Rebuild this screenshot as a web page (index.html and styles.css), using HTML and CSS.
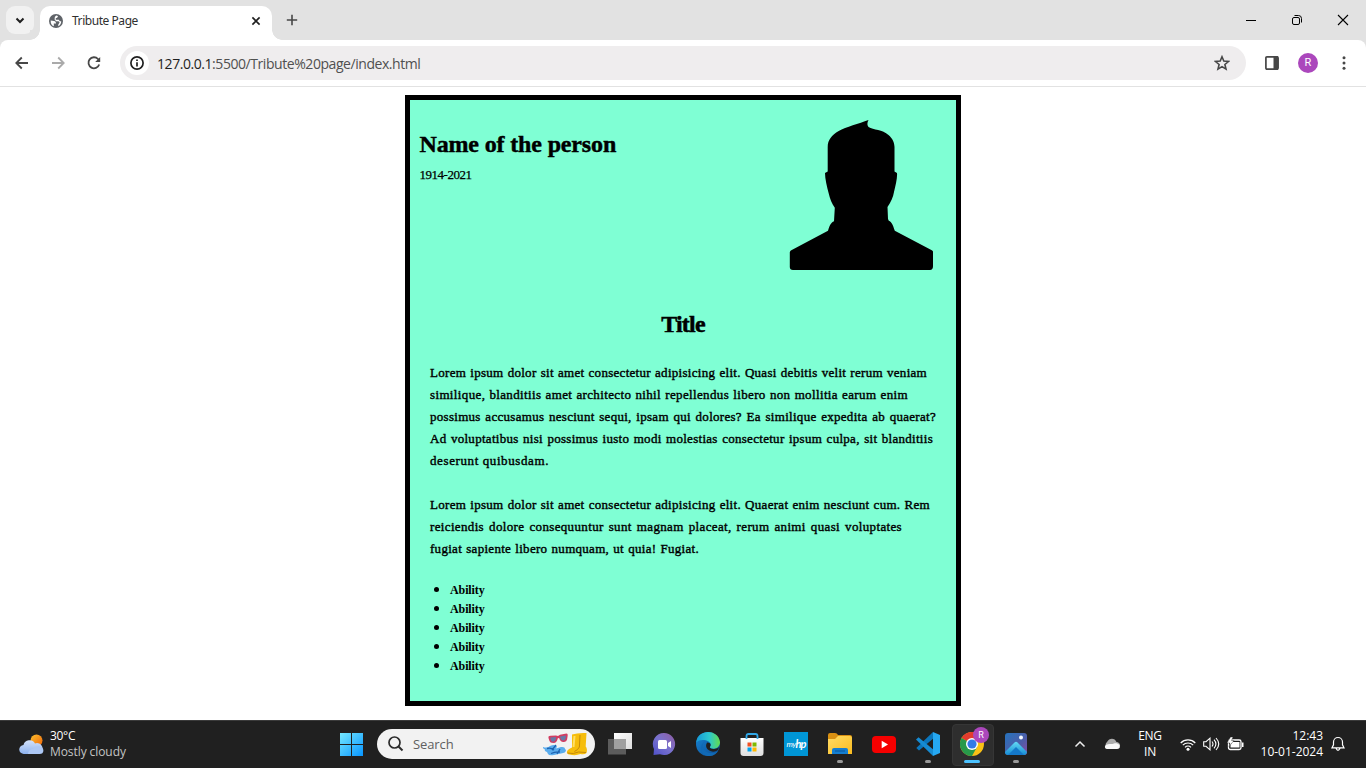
FILE: index.html
```html
<!DOCTYPE html>
<html lang="en">
<head>
<meta charset="utf-8">
<title>Tribute Page</title>
<link rel="stylesheet" href="styles.css">
</head>
<body>
<div class="browser">
<header class="tabstrip">
  <div class="tab-search"><svg width="28" height="28" viewBox="0 0 28 28"><path d="M10.500 12.500l3.500 3.500 3.500-3.500" fill="none" stroke="#1f1f1f" stroke-width="2"/></svg></div>
  <div class="tab">
    <svg width="14" height="14" viewBox="0 0 14 14"><circle cx="7" cy="7" r="7" fill="#5f6368"/><path d="M1.700 6.500L5 7c1.400.3 2 .9 2 2.400H4.800v2.800C2.700 11.400 1.500 9.500 1.700 6.500zM8.900 1.900C8.900 3.400 8 4 6.800 4v1.700h3.100l.8 1.500h1.500c.1 2.200-1.100 4.200-3 5l.1-1.700 1.300-1.900-1-1.300H7.100L5.600 5.400l.2-2.500 1.300-1.300z" fill="#fff"/></svg>
    <span class="tab-title">Tribute Page</span>
    <svg width="10" height="10" viewBox="0 0 10 10"><path d="M1.400 1.400l7.200 7.200M8.600 1.400L1.400 8.600" stroke="#1f1f1f" stroke-width="1.600"/></svg>
  </div>
  <svg class="new-tab" width="12" height="12" viewBox="0 0 12 12"><path d="M6 .8v10.400M.8 6h10.400" stroke="#474747" stroke-width="1.600"/></svg>
  <div class="window-buttons">
    <svg width="46" height="40" viewBox="0 0 46 40"><path d="M18 20.500h10" stroke="#000"/></svg>
    <svg width="46" height="40" viewBox="0 0 46 40"><path d="M20.500 15.500h4a3 3 0 0 1 3 3v4" fill="none" stroke="#000"/><rect x="18.500" y="17.500" width="7" height="7" rx="1.500" fill="none" stroke="#000"/></svg>
    <svg width="46" height="40" viewBox="0 0 46 40"><path d="M18 15l10 10M28 15L18 25" stroke="#000" stroke-width="1.100"/></svg>
  </div>
</header>
<nav class="toolbar">
  <svg width="36" height="36" viewBox="0 0 36 36"><path d="M24 18H12.500M17.800 12.500L12.300 18l5.500 5.500" fill="none" stroke="#474747" stroke-width="1.800"/></svg>
  <svg width="36" height="36" viewBox="0 0 36 36"><path d="M12 18h11.500M18.200 12.500l5.500 5.500-5.500 5.500" fill="none" stroke="#aaa" stroke-width="1.800"/></svg>
  <svg width="36" height="36" viewBox="0 0 36 36"><path d="M23.200 19.500a5.500 5.500 0 1 1-1.200-5.500l1.500 1.800" fill="none" stroke="#474747" stroke-width="1.800"/><path d="M24.200 12v5h-5z" fill="#474747"/></svg>
  <div class="omnibox">
    <span class="site-info"><svg width="14" height="14" viewBox="0 0 14 14"><circle cx="7" cy="7" r="6.100" fill="none" stroke="#1f1f1f" stroke-width="1.700"/><path d="M7 6.200v4.200M7 3.500v1.600" stroke="#1f1f1f" stroke-width="1.700"/></svg></span>
    <span class="url"><b>127.0.0.1</b>:5500/Tribute%20page/index.html</span>
    <svg width="16" height="16" viewBox="0 0 16 16"><path d="M8 1.800l1.800 4.300 4.700.4-3.600 3 1.100 4.600-4-2.500-4 2.500 1.100-4.600-3.600-3 4.700-.4z" fill="none" stroke="#474747" stroke-width="1.600"/></svg>
  </div>
  <svg class="panel" width="14" height="14" viewBox="0 0 14 14"><rect x=".9" y=".9" width="12.200" height="12.200" rx="1" fill="none" stroke="#474747" stroke-width="1.700"/><path d="M8.500 0H13v14H8.500z" fill="#474747"/></svg>
  <span class="avatar">R</span>
  <svg class="kebab" width="4" height="14" viewBox="0 0 4 14"><g fill="#474747"><circle cx="2" cy="1.800" r="1.500"/><circle cx="2" cy="7" r="1.500"/><circle cx="2" cy="12.200" r="1.500"/></g></svg>
</nav>
</div>
<main class="page">
  <article class="card">
    <section class="intro">
      <div>
        <h1 class="name">Name of the person</h1>
        <p class="years">1914-2021</p>
      </div>
      <svg class="portrait" width="144" height="150" viewBox="0 0 144 150"><path d="M79.500 0C78 3 78 5 79.500 7c5 3 14 2.500 20 8 4 3.500 5.800 7 6 12v24.500l2.500 1.500c.5 5-1.500 12-3 19-.8 5-3 10-6.500 15l.5 12 .8 1.800c3 1.500 4 4 6 10l37 19.500c1 .6 1.200 1 1.200 2v14c0 2.300-1 3.700-3 3.700H4c-2.200 0-3.200-1-3.200-3v-14c0-1.200.3-2 1.500-2.700L39 110.800c1.500-5 3-8.500 6-9.500l.8-13.500c-3-4-5-9.500-6-14C38 67 36 59 36 53l2.700-1.500V27c0-7 4-12 11-16C57 7 70 3.500 79.500 0z"/></svg>
    </section>
    <h2 class="title">Title</h2>
    <p class="para">
      <span class="line w497">Lorem ipsum dolor sit amet consectetur adipisicing elit. Quasi debitis velit rerum veniam</span>
      <span class="line w478">similique, blanditiis amet architecto nihil repellendus libero non mollitia earum enim</span>
      <span class="line w506">possimus accusamus nesciunt sequi, ipsam qui dolores? Ea similique expedita ab quaerat?</span>
      <span class="line w503">Ad voluptatibus nisi possimus iusto modi molestias consectetur ipsum culpa, sit blanditiis</span>
      <span class="line w119">deserunt quibusdam.</span>
    </p>
    <p class="para">
      <span class="line w500">Lorem ipsum dolor sit amet consectetur adipisicing elit. Quaerat enim nesciunt cum. Rem</span>
      <span class="line w472">reiciendis dolore consequuntur sunt magnam placeat, rerum animi quasi voluptates</span>
      <span class="line w269">fugiat sapiente libero numquam, ut quia! Fugiat.</span>
    </p>
    <ul class="abilities"><li>Ability</li><li>Ability</li><li>Ability</li><li>Ability</li><li>Ability</li></ul>
  </article>
</main>
<footer class="taskbar">
  <div class="weather">
    <svg width="25" height="21" viewBox="0 0 25 21"><defs><linearGradient id="sun" x1="0" y1="0" x2="1" y2="1"><stop stop-color="#fbc02d"/><stop offset="1" stop-color="#f0640a"/></linearGradient><linearGradient id="cl" x1="0" y1="0" x2="0" y2="1"><stop stop-color="#d3e2fb"/><stop offset="1" stop-color="#8db2ee"/></linearGradient></defs><circle cx="17.500" cy="6.500" r="6" fill="url(#sun)"/><path d="M5 20a4.500 4.500 0 0 1-.5-9A6.200 6.200 0 0 1 16 9.500a5.300 5.300 0 0 1 4 10.500z" fill="url(#cl)"/><path d="M9 20a5 5 0 0 1 5-5c1-3 7-4 9.500-1 2 3 .5 6-3 6z" fill="#adc8f5"/></svg>
    <div class="weather-text"><div class="temp">30°C</div><div class="condition">Mostly cloudy</div></div>
  </div>
  <div class="apps">
    <div class="app"><svg width="24" height="24" viewBox="0 0 24 24"><defs><linearGradient id="win" x1="0" y1="0" x2="1" y2="1"><stop stop-color="#75e8ff"/><stop offset="1" stop-color="#0795ff"/></linearGradient></defs><path d="M1 1h11v11H1zM13 1h11v11H13zM1 13h11v11H1zM13 13h11v11H13z" fill="url(#win)"/></svg></div>
    <div class="search">
      <svg width="16" height="16" viewBox="0 0 16 16"><circle cx="6.500" cy="6.500" r="5.500" fill="none" stroke="#2b2b2b" stroke-width="1.700"/><path d="M10.500 10.500l4 4" stroke="#2b2b2b" stroke-width="2"/></svg>
      <span class="search-label">Search</span>
      <svg class="doodle" width="45" height="25" viewBox="0 0 45 25"><path d="M5.500 6Q5 3.800 7.500 3.800l5.500-.3 2 .6 2-1.400 6.500-1.200q1.500 0 1.200 2l-.6 4q-.5 2-3 2.500-3.500.7-5-4l-1.300.2Q14 11 10.500 11q-3.500 0-4.200-2.500z" fill="#d23c62"/><path d="M7.300 5.500l5.700-.4q0 4.500-3 4.600-2.200 0-2.700-4.200zM17 4.600l6-1.200q-.2 5-2.800 5.200-2.400 0-3.200-4z" fill="#6678a6"/><path d="M0 15q4 1.500 7-1 5-2 7 .5l-1 2 5-1.500q4-.5 4 2l1 1q0 3-5 3.500l-7 1.500q-5 1-6-1l-1-2q-3-1-2-2.500Q-.5 16.500 0 15z" fill="#5aaced"/><path d="M4 16.500q4-1 7 1.500M13 13l-4 5M8 21.500q4-2 9-1.500M17 17l-3 5" stroke="#1d62b0" stroke-width="1.300" fill="none"/><path d="M29 2.500Q35 .5 43.500 1l-.8 13.500q2 2.500.8 6.500-2 1.800-6 1-5 2-11 .5-3-.5-2.500-3 .5-2 5-4z" fill="#f6bd0c"/><path d="M37 3l-.6 12q-1.400 3-5 4.500M24.500 21q6 1.500 11-1l7.500.5" stroke="#c48a09" fill="none"/><path d="M31.500 4l-1 11" stroke="#ffdf62" stroke-width="2"/></svg>
    </div>
    <div class="app"><svg width="24" height="22" viewBox="0 0 24 22"><defs><linearGradient id="tv" x1="0" y1="0" x2="1" y2="1"><stop stop-color="#fff"/><stop offset="1" stop-color="#ddd"/></linearGradient></defs><path d="M6 0h18v16H6z" fill="url(#tv)"/><path d="M0 6h18v15.500H0z" fill="#5c5c5c"/><path d="M6 6h12v10H6z" fill="#a0a0a0"/></svg></div>
    <div class="app"><svg width="24" height="24" viewBox="0 0 24 24"><defs><linearGradient id="chat" x1="1" y1="0" x2="0" y2="1"><stop stop-color="#8f5b9f"/><stop offset=".5" stop-color="#7972ce"/><stop offset="1" stop-color="#4e50c8"/></linearGradient></defs><path d="M12 1a11 11 0 1 1-4 21.200L1.500 23l.5-6A11 11 0 0 1 12 1z" fill="url(#chat)"/><rect x="6" y="8" width="9" height="9" rx="1.500" fill="#fff"/><path d="M16 11l3-2v7l-3-2z" fill="#fff"/></svg></div>
    <div class="app"><svg width="24" height="24" viewBox="0 0 24 24"><defs><linearGradient id="ed" x1="0" y1="0" x2="1" y2="0"><stop stop-color="#1598d8"/><stop offset=".55" stop-color="#2cc8cf"/><stop offset="1" stop-color="#63dd4d"/></linearGradient><linearGradient id="eb" x1="0" y1="0" x2="1" y2="1"><stop stop-color="#1785d4"/><stop offset="1" stop-color="#0c4e96"/></linearGradient></defs><circle cx="12" cy="12" r="12" fill="url(#eb)"/><path d="M.2 10.500C1.500-3 22-3.500 24 10c.2 5.500-5 8-9.500 6-1.200-.8-.5-1.300.1-2.500C16 8.500 4.500 5.500.2 10.500z" fill="url(#ed)"/><path d="M9 9.500c-5 4-1 12 7 11.500 3.500 0 5-1.300 6.500-3-2 5-7 6.500-11 6-7.500-1-9-11-2.500-14.500z" fill="#1169b5"/><path d="M11 10.500q4 .2 3.500 3l-.7 2q1 2 5 1.500 3-.4 4.500-2-1 3-3 4-4 1.500-7-.5-5-3-2.300-8z" fill="#202020"/></svg></div>
    <div class="app"><svg width="24" height="24" viewBox="0 0 24 24"><defs><linearGradient id="st" x1="0" y1="0" x2="0" y2="1"><stop stop-color="#fff"/><stop offset="1" stop-color="#dedede"/></linearGradient></defs><path d="M.5 6h23v15q0 3-3 3h-17q-3 0-3-3z" fill="url(#st)"/><path d="M6.500 7V4q0-2 2-2h7q2 0 2 2v3" fill="none" stroke="#31a8e8" stroke-width="1.800"/><path d="M7.500 10.500h4v4h-4z" fill="#f25022"/><path d="M12.500 10.500h4v4h-4z" fill="#7fba00"/><path d="M7.500 15.500h4v4h-4z" fill="#00a4ef"/><path d="M12.500 15.500h4v4h-4z" fill="#ffb900"/></svg></div>
    <div class="app"><span class="hp"><i class="my">my</i><i class="hp-letters">hp</i></span></div>
    <div class="app running"><svg width="24" height="22" viewBox="0 0 24 22"><defs><linearGradient id="fo" x1="0" y1="0" x2="1" y2="1"><stop stop-color="#ffdc65"/><stop offset="1" stop-color="#fabb20"/></linearGradient></defs><path d="M0 2q0-2 2-2h5q2 0 3 2h12q2 0 2 2v8H0z" fill="#d99012"/><path d="M0 6h7l3-3h12q2 0 2 2v16H0z" fill="url(#fo)"/><path d="M4 21v-4q0-2 2-2h12q2 0 2 2v4z" fill="#147ed0"/><path d="M7 18h10" stroke="#0c60aa" stroke-width="1.400"/></svg></div>
    <div class="app"><svg width="24" height="17" viewBox="0 0 24 17"><rect width="24" height="17" rx="4" fill="#f60000"/><path d="M9.700 4.800l6.300 3.700-6.300 3.700z" fill="#fff"/></svg></div>
    <div class="app running"><svg width="24" height="24" viewBox="0 0 24 24"><path d="M17 0l7 3v18l-7 3z" fill="#25a8f2"/><path d="M17 0v6.800L3 18.500l-2.700-2.500z" fill="#0b76bc"/><path d="M0 7.500l2.500-2.200L17 17.200V24z" fill="#168bd2"/></svg></div>
    <div class="app running active"><svg width="24" height="24" viewBox="0 0 24 24"><circle cx="12" cy="12" r="12" fill="#fbc116"/><path d="M12 12L1.600 6A12 12 0 0 1 22.400 6z" fill="#e33b2e"/><path d="M1.600 6A12 12 0 0 0 12 24l5-9-5-3z" fill="#27994a"/><circle cx="12" cy="12" r="6" fill="#fff"/><circle cx="12" cy="12" r="4.600" fill="#337be8"/></svg><span class="profile-badge">R</span></div>
    <div class="app running"><svg width="22" height="22" viewBox="0 0 22 22"><defs><linearGradient id="ph" x1="0" y1="0" x2="1" y2="1"><stop stop-color="#2573bd"/><stop offset=".6" stop-color="#4f5ca8"/><stop offset="1" stop-color="#874aa6"/></linearGradient><linearGradient id="mt" x1="0" y1="0" x2="0" y2="1"><stop stop-color="#63daf5"/><stop offset="1" stop-color="#168bd3"/></linearGradient></defs><rect width="22" height="22" rx="3" fill="url(#ph)"/><circle cx="16" cy="4.500" r="2" fill="#f5faff"/><path d="M0 19L9.500 9.500q1.500-1.500 3 0L22 19q-.5 3-3 3H3q-3 0-3-3z" fill="url(#mt)"/><path d="M3 22l8-8 8 8z" fill="#1478c9"/></svg></div>
  </div>
  <div class="tray">
    <svg width="12" height="8" viewBox="0 0 12 8"><path d="M1.500 6.500L6 2l4.500 4.500" fill="none" stroke="#eee" stroke-width="1.500"/></svg>
    <svg class="onedrive" width="17" height="12" viewBox="0 0 17 12"><path d="M2.500 9Q.5 6 3 4C5-.5 11-.5 12.500 4c2 0 4 2 3.500 4z" fill="#aaa"/><path d="M3 11c-3-.5-2.500-4 0-4.500 3-1 5 0 7-1 4-1 7 2 5.500 4.500q-1 1-2.500 1z" fill="#f7f7f7"/></svg>
    <div class="lang"><div>ENG</div><div>IN</div></div>
    <svg class="wifi" width="16" height="13" viewBox="0 0 16 13"><g fill="none" stroke="#fff" stroke-width="1.200"><path d="M.7 5a10.300 10.300 0 0 1 14.600 0M2.800 7.200a7.300 7.300 0 0 1 10.400 0M5 9.400a4.300 4.300 0 0 1 6 0"/></g><circle cx="8" cy="11.300" r="1.500" fill="#fff"/></svg>
    <svg class="volume" width="17" height="14" viewBox="0 0 17 14"><g fill="none" stroke="#fff" stroke-width="1.100"><path d="M.7 4.700H3l4-3.500v11.600L3 9.300H.7zM9 4.500q2 2.500 0 5M11 2.700q3.800 4.300 0 8.600M13 1q5.500 6 0 12"/></g></svg>
    <svg class="battery" width="17" height="14" viewBox="0 0 17 14"><rect x="1.500" y="3" width="12.500" height="9.500" rx="1.800" fill="none" stroke="#fff" stroke-width="1.300"/><path d="M5 5h7.500v5.500h-9V8z" fill="#fff"/><path d="M15 5.500h1.500v4.500H15z" fill="#fff"/><path d="M3.500 0L0 6h3L2 9.500l5-6H4.500L6 0z" fill="#fff" stroke="#202020" stroke-width=".4"/></svg>
    <div class="clock"><div>12:43</div><div>10-01-2024</div></div>
    <svg class="bell" width="14" height="16" viewBox="0 0 14 16"><path d="M1 11.800l1.500-3V6a4.500 4.500 0 0 1 9 0v2.800l1.500 3zM5 12.300q2 4 4 0" fill="none" stroke="#fff" stroke-width="1.200"/></svg>
  </div>
</footer>
</body>
</html>
```
FILE: styles.css
```css
* { box-sizing: border-box; }
body { margin: 0; width: 1366px; height: 768px; overflow: hidden; display: flex; flex-direction: column; background: #fff; font-family: "Open Sans", "Noto Sans", sans-serif; }
svg { display: block; flex: none; }
h1, h2, p, ul { margin: 0; }

.browser { flex: none; background: #e2e2e2; }
.tabstrip { height: 40px; display: flex; padding-left: 6px; }
.tab-search { width: 28px; height: 28px; margin-top: 6px; border-radius: 9px; background: #f1f1f1; }
.tab { position: relative; width: 232px; height: 34px; margin: 6px 0 0 6px; padding: 0 11px 5px 9px; display: flex; align-items: center; background: #fff; border-radius: 10px 10px 0 0; }
.tab::before, .tab::after { content: ""; position: absolute; bottom: 0; width: 10px; height: 10px; }
.tab::before { left: -10px; background: radial-gradient(circle at 0 0, #e2e2e2 9.500px, #fff 10px); }
.tab::after { right: -10px; background: radial-gradient(circle at 100% 0, #e2e2e2 9.500px, #fff 10px); }
.tab-title { flex: 1; margin-left: 9px; font: 12px "Noto Sans", sans-serif; letter-spacing: -.45px; color: #303030; }
.new-tab { margin: 14px 0 0 14px; }
.window-buttons { display: flex; margin-left: auto; }

.toolbar { height: 47px; display: flex; align-items: center; padding-left: 4px; background: #fff; border-radius: 8px 8px 0 0; box-shadow: inset 0 -1px #e2e2e2; padding-bottom: 1px; }
.omnibox { width: 1126px; height: 34px; margin-left: 8px; padding: 0 16px 0 5px; border-radius: 17px; background: #efedee; display: flex; align-items: center; }
.site-info { width: 24px; height: 24px; border-radius: 50%; background: #fff; display: grid; place-items: center; }
.url { flex: 1; margin-left: 8px; font-size: 14px; letter-spacing: -.44px; color: #505050; }
.url b { font-weight: 400; color: #1f1f1f; }
.panel { margin-left: 19px; }
.avatar { width: 20px; height: 20px; margin-left: 19px; border-radius: 50%; background: #ab47bc; color: #fff; font: 11px/20px Roboto, sans-serif; text-align: center; }
.kebab { margin-left: 24px; }

.page { flex: 1; padding-top: 8px; font-family: "Liberation Serif", serif; color: #000; }
.card { width: 556px; height: 611px; margin: 0 auto; border: 5px solid #000; background: #7fffd4; }
.intro { height: 170px; display: flex; justify-content: space-between; padding: 20px 23.500px 0 9.500px; }
.name { margin-top: 9px; font-size: 24px; line-height: 31px; letter-spacing: -.15px; -webkit-text-stroke: .45px #000; }
.years { margin-top: 6px; font-size: 13px; line-height: 18px; letter-spacing: -.48px; -webkit-text-stroke: .25px #000; }
.title { margin-top: 38px; text-align: center; font-size: 24px; line-height: 33px; letter-spacing: -.8px; -webkit-text-stroke: .5px #000; }
.para { margin: 21px 0 0 20px; line-height: 22px; font-size: 13px; -webkit-text-stroke: .4px #000; }
.para + .para { margin-top: 22px; }
.line { display: block; white-space: nowrap; text-align-last: justify; letter-spacing: .29px; }
.w497 { width: 497px; }
.w478 { width: 478px; letter-spacing: .36px; }
.w506 { width: 506px; }
.w503 { width: 503px; }
.w119 { width: 119px; letter-spacing: .6px; }
.w500 { width: 500px; }
.w472 { width: 472px; letter-spacing: .35px; }
.w269 { width: 269px; }
.abilities { margin-top: 20px; padding-left: 40px; font-size: 12px; font-weight: 700; letter-spacing: -.1px; }
.abilities li { height: 19px; line-height: 17px; }
.abilities li::marker { font-size: 16px; }

.taskbar { height: 48px; flex: none; display: grid; grid-template-columns: 329px 709px 1fr; background: #202020; box-shadow: inset 0 1px #3a3a3a; color: #fff; }
.weather { display: flex; align-items: center; padding-left: 19px; }
.weather-text { margin-left: 6px; font-size: 12px; line-height: 16px; }
.temp { letter-spacing: -.3px; }
.condition { color: #c4c4c4; letter-spacing: -.08px; }
.apps { display: flex; align-items: center; }
.app { position: relative; width: 44px; height: 40px; display: grid; place-items: center; }
.search { width: 218px; height: 30px; margin: 0 3px 0 4px; padding: 0 7px 0 11px; border-radius: 15px; background: #f2f2f2; display: flex; align-items: center; }
.search-label { margin-left: 9px; color: #606060; font-size: 13px; letter-spacing: -.1px; }
.doodle { margin-left: auto; }
.running::after { content: ""; position: absolute; left: 19px; bottom: 1px; width: 6px; height: 3px; border-radius: 2px; background: #999; }
.active::before { content: ""; position: absolute; left: 2px; top: 0; width: 40px; height: 40px; border-radius: 4px; background: #2e2e2e; border: 1px solid #363636; z-index: -1; }
.active { isolation: isolate; }
.active::after { left: 14px; width: 16px; background: #4cc2ff; }
.profile-badge { position: absolute; left: 23px; top: 3px; width: 16px; height: 16px; border-radius: 50%; background: #ab47bc; font: 9px/16px Roboto, sans-serif; text-align: center; }
.hp { width: 24px; height: 24px; background: #0096d6; display: flex; align-items: center; justify-content: center; font: 8px/20px Lato, sans-serif; }
.my { letter-spacing: -.5px; }
.hp-letters { font-size: 11px; font-weight: 700; letter-spacing: -1px; }
.tray { display: flex; align-items: center; padding-left: 36px; font-size: 12px; line-height: 16px; }
.onedrive { margin-left: 18px; }
.lang { width: 30px; margin-left: 14px; text-align: center; letter-spacing: -.3px; }
.wifi { margin-left: 15px; }
.volume { margin-left: 7px; }
.battery { margin-left: 7px; }
.clock { width: 70px; margin-left: 9px; text-align: right; letter-spacing: -.02px; white-space: nowrap; }
.bell { margin-left: 8px; }
```
